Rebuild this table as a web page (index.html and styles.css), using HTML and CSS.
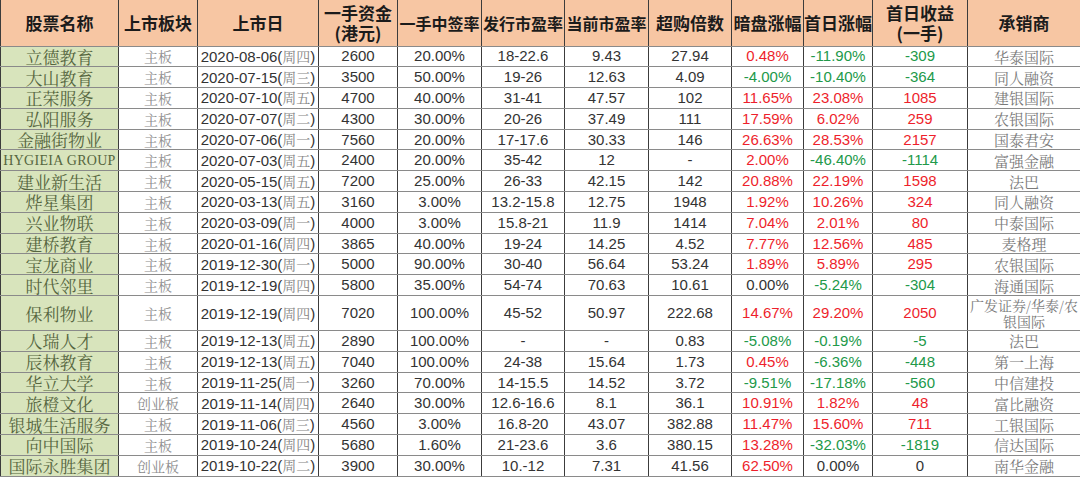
FILE: index.html
```html
<!DOCTYPE html>
<html lang="zh-CN">
<head>
<meta charset="utf-8">
<title>港股物业教育新股表现</title>
<link rel="stylesheet" href="styles.css">
</head>
<body>
<table class="ipo">
  <colgroup>
    <col class="c-name"><col class="c-board"><col class="c-date"><col class="c-cap"><col class="c-rate">
    <col class="c-pe1"><col class="c-pe2"><col class="c-over"><col class="c-grey"><col class="c-first">
    <col class="c-gain"><col class="c-uw">
  </colgroup>
  <thead>
    <tr class="head">
      <th>股票名称</th><th>上市板块</th><th>上市日</th><th><span class="hl">一手资金</span><span class="hl">(港元)</span></th><th class="narrow">一手中签率</th>
      <th class="narrow">发行市盈率</th><th class="narrow">当前市盈率</th><th>超购倍数</th><th>暗盘涨幅</th><th>首日涨幅</th>
      <th><span class="hl">首日收益</span><span class="hl">(一手)</span></th><th>承销商</th>
    </tr>
  </thead>
  <tbody>
    <tr><td class="name">立德教育</td><td class="board">主板</td><td class="num">2020-08-06(<span class="wd">周四</span>)</td><td class="num">2600</td><td class="num">20.00%</td><td class="num">18-22.6</td><td class="num">9.43</td><td class="num">27.94</td><td class="num up">0.48%</td><td class="num down">-11.90%</td><td class="num down">-309</td><td class="uw">华泰国际</td></tr>
    <tr><td class="name">大山教育</td><td class="board">主板</td><td class="num">2020-07-15(<span class="wd">周三</span>)</td><td class="num">3500</td><td class="num">50.00%</td><td class="num">19-26</td><td class="num">12.63</td><td class="num">4.09</td><td class="num down">-4.00%</td><td class="num down">-10.40%</td><td class="num down">-364</td><td class="uw">同人融资</td></tr>
    <tr><td class="name">正荣服务</td><td class="board">主板</td><td class="num">2020-07-10(<span class="wd">周五</span>)</td><td class="num">4700</td><td class="num">40.00%</td><td class="num">31-41</td><td class="num">47.57</td><td class="num">102</td><td class="num up">11.65%</td><td class="num up">23.08%</td><td class="num up">1085</td><td class="uw">建银国际</td></tr>
    <tr><td class="name">弘阳服务</td><td class="board">主板</td><td class="num">2020-07-07(<span class="wd">周二</span>)</td><td class="num">4300</td><td class="num">30.00%</td><td class="num">20-26</td><td class="num">37.49</td><td class="num">111</td><td class="num up">17.59%</td><td class="num up">6.02%</td><td class="num up">259</td><td class="uw">农银国际</td></tr>
    <tr><td class="name">金融街物业</td><td class="board">主板</td><td class="num">2020-07-06(<span class="wd">周一</span>)</td><td class="num">7560</td><td class="num">20.00%</td><td class="num">17-17.6</td><td class="num">30.33</td><td class="num">146</td><td class="num up">26.63%</td><td class="num up">28.53%</td><td class="num up">2157</td><td class="uw">国泰君安</td></tr>
    <tr><td class="name latin">HYGIEIA GROUP</td><td class="board">主板</td><td class="num">2020-07-03(<span class="wd">周五</span>)</td><td class="num">2400</td><td class="num">20.00%</td><td class="num">35-42</td><td class="num">12</td><td class="num">-</td><td class="num up">2.00%</td><td class="num down">-46.40%</td><td class="num down">-1114</td><td class="uw">富强金融</td></tr>
    <tr><td class="name">建业新生活</td><td class="board">主板</td><td class="num">2020-05-15(<span class="wd">周五</span>)</td><td class="num">7200</td><td class="num">25.00%</td><td class="num">26-33</td><td class="num">42.15</td><td class="num">142</td><td class="num up">20.88%</td><td class="num up">22.19%</td><td class="num up">1598</td><td class="uw">法巴</td></tr>
    <tr><td class="name">烨星集团</td><td class="board">主板</td><td class="num">2020-03-13(<span class="wd">周五</span>)</td><td class="num">3160</td><td class="num">3.00%</td><td class="num">13.2-15.8</td><td class="num">12.75</td><td class="num">1948</td><td class="num up">1.92%</td><td class="num up">10.26%</td><td class="num up">324</td><td class="uw">同人融资</td></tr>
    <tr><td class="name">兴业物联</td><td class="board">主板</td><td class="num">2020-03-09(<span class="wd">周一</span>)</td><td class="num">4000</td><td class="num">3.00%</td><td class="num">15.8-21</td><td class="num">11.9</td><td class="num">1414</td><td class="num up">7.04%</td><td class="num up">2.01%</td><td class="num up">80</td><td class="uw">中泰国际</td></tr>
    <tr><td class="name">建桥教育</td><td class="board">主板</td><td class="num">2020-01-16(<span class="wd">周四</span>)</td><td class="num">3865</td><td class="num">40.00%</td><td class="num">19-24</td><td class="num">14.25</td><td class="num">4.52</td><td class="num up">7.77%</td><td class="num up">12.56%</td><td class="num up">485</td><td class="uw">麦格理</td></tr>
    <tr><td class="name">宝龙商业</td><td class="board">主板</td><td class="num">2019-12-30(<span class="wd">周一</span>)</td><td class="num">5000</td><td class="num">90.00%</td><td class="num">30-40</td><td class="num">56.64</td><td class="num">53.24</td><td class="num up">1.89%</td><td class="num up">5.89%</td><td class="num up">295</td><td class="uw">农银国际</td></tr>
    <tr><td class="name">时代邻里</td><td class="board">主板</td><td class="num">2019-12-19(<span class="wd">周四</span>)</td><td class="num">5800</td><td class="num">35.00%</td><td class="num">54-74</td><td class="num">70.63</td><td class="num">10.61</td><td class="num">0.00%</td><td class="num down">-5.24%</td><td class="num down">-304</td><td class="uw">海通国际</td></tr>
    <tr class="tall"><td class="name">保利物业</td><td class="board">主板</td><td class="num">2019-12-19(<span class="wd">周四</span>)</td><td class="num">7020</td><td class="num">100.00%</td><td class="num">45-52</td><td class="num">50.97</td><td class="num">222.68</td><td class="num up">14.67%</td><td class="num up">29.20%</td><td class="num up">2050</td><td class="uw"><span class="ul">广发证券/华泰/农</span><span class="ul">银国际</span></td></tr>
    <tr><td class="name">人瑞人才</td><td class="board">主板</td><td class="num">2019-12-13(<span class="wd">周五</span>)</td><td class="num">2890</td><td class="num">100.00%</td><td class="num">-</td><td class="num">-</td><td class="num">0.83</td><td class="num down">-5.08%</td><td class="num down">-0.19%</td><td class="num down">-5</td><td class="uw">法巴</td></tr>
    <tr><td class="name">辰林教育</td><td class="board">主板</td><td class="num">2019-12-13(<span class="wd">周五</span>)</td><td class="num">7040</td><td class="num">100.00%</td><td class="num">24-38</td><td class="num">15.64</td><td class="num">1.73</td><td class="num up">0.45%</td><td class="num down">-6.36%</td><td class="num down">-448</td><td class="uw">第一上海</td></tr>
    <tr><td class="name">华立大学</td><td class="board">主板</td><td class="num">2019-11-25(<span class="wd">周一</span>)</td><td class="num">3260</td><td class="num">70.00%</td><td class="num">14-15.5</td><td class="num">14.52</td><td class="num">3.72</td><td class="num down">-9.51%</td><td class="num down">-17.18%</td><td class="num down">-560</td><td class="uw">中信建投</td></tr>
    <tr><td class="name">旅橙文化</td><td class="board">创业板</td><td class="num">2019-11-14(<span class="wd">周四</span>)</td><td class="num">2640</td><td class="num">30.00%</td><td class="num">12.6-16.6</td><td class="num">8.1</td><td class="num">36.1</td><td class="num up">10.91%</td><td class="num up">1.82%</td><td class="num up">48</td><td class="uw">富比融资</td></tr>
    <tr><td class="name">银城生活服务</td><td class="board">主板</td><td class="num">2019-11-06(<span class="wd">周三</span>)</td><td class="num">4560</td><td class="num">3.00%</td><td class="num">16.8-20</td><td class="num">43.07</td><td class="num">382.88</td><td class="num up">11.47%</td><td class="num up">15.60%</td><td class="num up">711</td><td class="uw">工银国际</td></tr>
    <tr><td class="name">向中国际</td><td class="board">主板</td><td class="num">2019-10-24(<span class="wd">周四</span>)</td><td class="num">5680</td><td class="num">1.60%</td><td class="num">21-23.6</td><td class="num">3.6</td><td class="num">380.15</td><td class="num up">13.28%</td><td class="num down">-32.03%</td><td class="num down">-1819</td><td class="uw">信达国际</td></tr>
    <tr><td class="name">国际永胜集团</td><td class="board">创业板</td><td class="num">2019-10-22(<span class="wd">周二</span>)</td><td class="num">3900</td><td class="num">30.00%</td><td class="num">10.-12</td><td class="num">7.31</td><td class="num">41.56</td><td class="num up">62.50%</td><td class="num">0.00%</td><td class="num">0</td><td class="uw">南华金融</td></tr>
  </tbody>
</table>
</body>
</html>
```

FILE: styles.css
```css
html, body {
  margin: 0;
  padding: 0;
  background: #ffffff;
}

.ipo {
  border-collapse: collapse;
  table-layout: fixed;
  width: 1080px;
}

.c-name { width: 118px; }
.c-board { width: 79px; }
.c-date { width: 121px; }
.c-cap { width: 79px; }
.c-rate { width: 84px; }
.c-pe1 { width: 83px; }
.c-pe2 { width: 84px; }
.c-over { width: 83px; }
.c-grey { width: 72px; }
.c-first { width: 69px; }
.c-gain { width: 95px; }
.c-uw { width: 113px; }

.ipo th,
.ipo td {
  padding: 0;
  text-align: center;
  vertical-align: middle;
  white-space: nowrap;
  border-top: 1px solid #8a8a8a;
  border-bottom: 1px solid #8a8a8a;
  border-left: 1px solid #3c3c3c;
  border-right: 1px solid #3c3c3c;
}

.head {
  height: 46px;
}

.head th {
  background: #f7c6a3;
  color: #1b1b1b;
  font-family: "Noto Sans CJK SC", "Liberation Sans", sans-serif;
  font-weight: 700;
  font-size: 17px;
  line-height: 22px;
  border-top: none;
}

.head th.narrow {
  font-size: 16px;
}

.hl {
  display: block;
  line-height: 20px;
}

.ipo tbody tr {
  height: 20.8px;
}

.ipo tbody tr.tall {
  height: 35px;
}

.name {
  background: #d8e4bc;
  color: #56663f;
  font-family: "Noto Serif CJK SC", "Liberation Serif", "Noto Sans CJK SC", serif;
  font-size: 17px;
  line-height: 19px;
}

.name.latin {
  font-family: "Liberation Serif", serif;
  font-size: 14px;
  letter-spacing: 0.3px;
}

.board {
  color: #8c8c8c;
  font-family: "Noto Serif CJK SC", "Liberation Serif", "Noto Sans CJK SC", serif;
  font-size: 14px;
  line-height: 18px;
}

.num {
  color: #333333;
  font-family: "Liberation Sans", Arial, sans-serif;
  font-size: 15px;
  line-height: 18px;
}

.wd {
  color: #858585;
  font-family: "Noto Serif CJK SC", "Noto Sans CJK SC", serif;
  font-size: 14px;
}

.up {
  color: #ee1f2c;
}

.down {
  color: #22994a;
}

.uw {
  color: #7a7a7a;
  font-family: "Noto Serif CJK SC", "Liberation Serif", "Noto Sans CJK SC", serif;
  font-size: 15px;
  line-height: 17px;
}

.ul {
  display: block;
  font-size: 14px;
  line-height: 16px;
}
```
